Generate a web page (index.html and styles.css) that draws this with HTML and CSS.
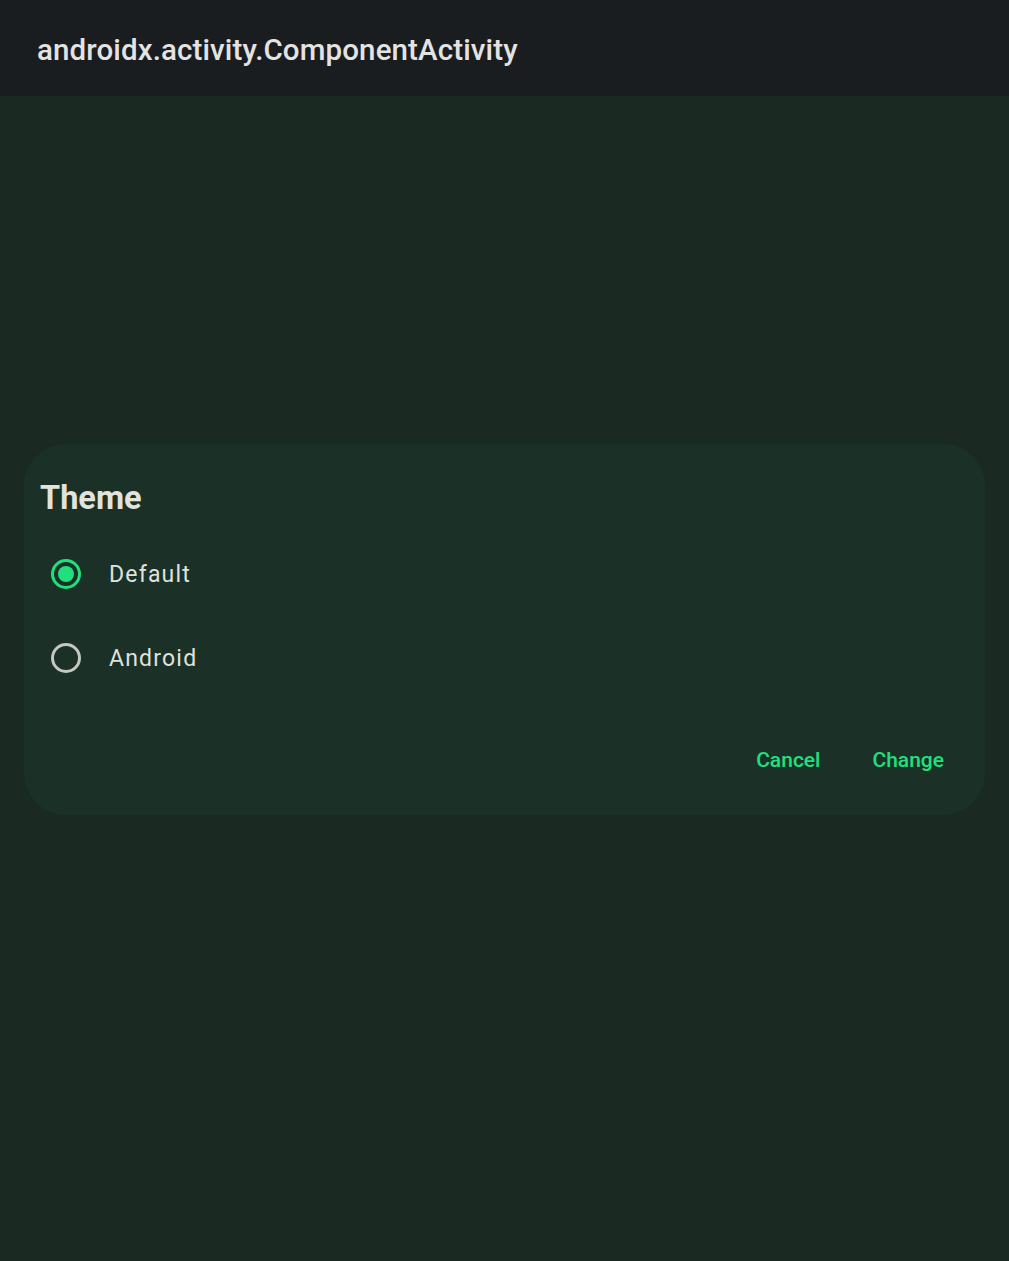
FILE: index.html
```html
<!DOCTYPE html>
<html>
<head>
<meta charset="utf-8">
<link rel="stylesheet" href="styles.css">
</head>
<body>
<div class="appbar"><span class="apptitle">androidx.activity.ComponentActivity</span></div>
<main class="content">
  <div class="dialog">
    <h2 class="dtitle">Theme</h2>
    <div class="options">
      <div class="option">
        <span class="radio checked"><span class="dot"></span></span>
        <span class="label">Default</span>
      </div>
      <div class="option">
        <span class="radio"></span>
        <span class="label">Android</span>
      </div>
    </div>
    <div class="actions">
      <span class="btn">Cancel</span>
      <span class="btn">Change</span>
    </div>
  </div>
</main>
</body>
</html>
```
FILE: styles.css
```css
html, body { margin: 0; padding: 0; }
body {
  width: 1009px;
  height: 1261px;
  background: #1a2a22;
  font-family: Roboto, "Noto Sans", sans-serif;
  display: flex;
  flex-direction: column;
  overflow: hidden;
}
.appbar {
  height: 96px;
  background: #1a1d20;
  display: flex;
  align-items: center;
  padding-left: 37px;
  flex-shrink: 0;
}
.apptitle {
  color: #e3e3e3;
  font-size: 29.5px;
  font-weight: 500;
  letter-spacing: 0.12px;
  margin-top: 4px;
}
.content {
  flex: 1;
  padding: 348px 24px 0;
}
.dialog {
  background: #1b3127;
  border-radius: 42px;
  height: 371px;
  box-sizing: border-box;
  padding: 34px 16px 0;
  display: flex;
  flex-direction: column;
}
.dtitle {
  margin: 0;
  color: #e2e3dc;
  font-size: 32.5px;
  font-weight: 700;
  line-height: 40px;
}
.options {
  margin-top: 14px;
  display: flex;
  flex-direction: column;
}
.option {
  height: 84px;
  display: flex;
  align-items: center;
  padding-left: 11px;
}
.radio {
  width: 30px;
  height: 30px;
  border: 3px solid #c3c8c0;
  border-radius: 50%;
  box-sizing: border-box;
  display: flex;
  align-items: center;
  justify-content: center;
}
.radio.checked { border-color: #20e07c; }
.dot {
  width: 16px;
  height: 16px;
  border-radius: 50%;
  background: #20e07c;
}
.label {
  margin-left: 28px;
  color: #dfe2dc;
  font-size: 23px;
  letter-spacing: 1.2px;
}
.actions {
  margin-top: 48px;
  display: flex;
  justify-content: flex-end;
  gap: 52px;
  padding-right: 25px;
}
.btn {
  color: #20e07c;
  font-size: 21px;
  font-weight: 500;
}
```
